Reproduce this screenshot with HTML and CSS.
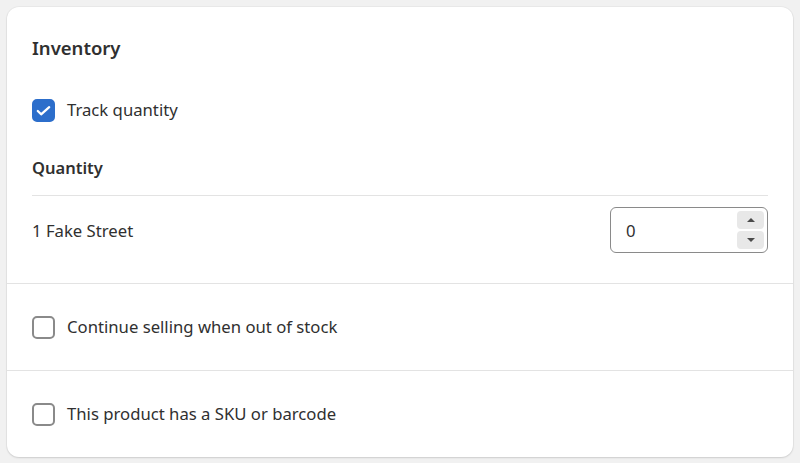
FILE: index.html
```html
<!DOCTYPE html>
<html lang="en">
<head>
<meta charset="utf-8">
<title>Inventory</title>
<link rel="stylesheet" href="styles.css">
</head>
<body>
<div class="card">
  <section class="section first">
    <h2 class="title">Inventory</h2>
    <label class="check-row track">
      <span class="box checked">
        <svg viewBox="0 0 20 20" width="19" height="19"><path d="M4 10.5l3.5 3.5L16 6.5" fill="none" stroke="#fff" stroke-width="2.4" stroke-linecap="round" stroke-linejoin="round"/></svg>
      </span>
      <span class="label">Track quantity</span>
    </label>
    <h3 class="subtitle">Quantity</h3>
    <div class="divider"></div>
    <div class="loc-row">
      <span class="label">1 Fake Street</span>
      <div class="number-input">
        <span class="value">0</span>
        <div class="spinner">
          <span class="spin-btn"><span class="tri up"></span></span>
          <span class="spin-btn"><span class="tri down"></span></span>
        </div>
      </div>
    </div>
  </section>
  <section class="section option">
    <label class="check-row">
      <span class="box"></span>
      <span class="label">Continue selling when out of stock</span>
    </label>
  </section>
  <section class="section option last">
    <label class="check-row">
      <span class="box"></span>
      <span class="label">This product has a SKU or barcode</span>
    </label>
  </section>
</div>
</body>
</html>
```
FILE: styles.css
```css
* { box-sizing: border-box; }
html, body { margin: 0; }
body {
  background: #f1f1f1;
  padding: 7px;
  font-family: "Noto Sans", "Open Sans", sans-serif;
  font-size: 16.7px;
  color: #303030;
  height: 463px;
}
.card {
  background: #fff;
  border-radius: 12px;
  box-shadow: 0 1px 2px rgba(0,0,0,0.12), 0 0 0 1px rgba(0,0,0,0.03);
  height: 450px;
  display: flex;
  flex-direction: column;
}
.section {
  padding: 0 25px;
}
.first {
  padding-top: 29px;
  padding-bottom: 30px;
  border-bottom: 1px solid #e3e3e3;
  display: flex;
  flex-direction: column;
}
.title {
  margin: 0;
  font-size: 18.5px;
  font-weight: 600;
  line-height: 24px;
}
.check-row {
  display: flex;
  align-items: center;
  gap: 12px;
  line-height: 24px;
}
.track { margin-top: 38px; }
.box {
  width: 23px;
  height: 23px;
  border: 2px solid #8a8a8a;
  border-radius: 5px;
  display: flex;
  align-items: center;
  justify-content: center;
  flex: none;
}
.box.checked {
  background: #2c6ecb;
  border-color: #2c6ecb;
}
.subtitle {
  margin: 34px 0 0;
  font-size: 16.5px;
  font-weight: 600;
  line-height: 24px;
}
.divider {
  margin-top: 15px;
  height: 1px;
  background: #e3e3e3;
}
.loc-row {
  margin-top: 11px;
  display: flex;
  align-items: center;
  justify-content: space-between;
}
.number-input {
  width: 158px;
  height: 46px;
  border: 1px solid #8a8a8a;
  border-radius: 6px;
  display: flex;
  align-items: center;
  justify-content: space-between;
  padding: 0 3px 0 15px;
}
.spinner {
  display: flex;
  flex-direction: column;
  gap: 2px;
}
.spin-btn {
  width: 27px;
  height: 18px;
  background: #e8e8e8;
  border-radius: 4px;
  display: flex;
  align-items: center;
  justify-content: center;
}
.tri {
  width: 0;
  height: 0;
  border-left: 4px solid transparent;
  border-right: 4px solid transparent;
}
.tri.up { border-bottom: 4px solid #4a4a4a; }
.tri.down { border-top: 4px solid #4a4a4a; }
.option {
  height: 87px;
  display: flex;
  align-items: center;
}
.option:not(.last) { border-bottom: 1px solid #e3e3e3; }
.option.last { flex: 1; }
```
